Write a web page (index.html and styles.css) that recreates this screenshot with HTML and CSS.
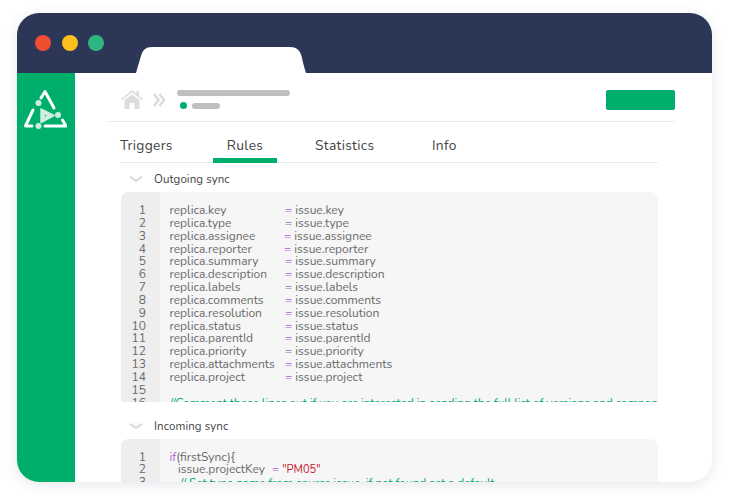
FILE: index.html
```html
<!DOCTYPE html>
<html lang="en">
<head>
<meta charset="utf-8">
<title>Sync rules</title>
<link rel="stylesheet" href="styles.css">
</head>
<body>
<div class="window">
  <header class="titlebar">
    <div class="dots"><i class="dot red"></i><i class="dot yellow"></i><i class="dot green"></i></div>
    <svg class="browser-tab" viewBox="0 0 170 26" width="170" height="26"><path d="M0 26 C3 16 4 12 5 9 C6.500 3 10 0 16 0 H154 C160 0 164 3 165.500 9 C166.500 13 167.500 18 170 26 Z" fill="#fff"/></svg>
  </header>
  <div class="body">
    <aside class="sidebar">
      <svg class="logo" viewBox="0 0 44 42" width="44" height="42">
        <g fill="none" stroke="#fff" stroke-width="3" stroke-linecap="round" stroke-linejoin="round">
          <path d="M18 9 L22 2.500 L31 19"/>
          <path d="M10 21 L2.500 37 H9"/>
          <path d="M22 37 H43 L39.500 31"/>
        </g>
        <g fill="#cdeee0">
          <circle cx="15.500" cy="14" r="3"/>
          <circle cx="35" cy="26" r="3"/>
          <circle cx="15.500" cy="37" r="3"/>
          <path fill-rule="evenodd" stroke="#cdeee0" stroke-width="1.500" stroke-linejoin="round" d="M18 20 L31 26.500 L18 33.500 Z M21 24.500 V29 L25.500 26.500 Z"/>
        </g>
      </svg>
    </aside>
    <main class="main">
      <div class="topbar">
        <svg class="home" viewBox="0 0 22 19" width="22" height="19"><path fill="#dcdcdc" d="M11 0 L15.500 3.600 V1 H18 V5.700 L22 9 L21 10.300 L11 2.300 L1 10.300 L0 9 Z M3.500 10.200 L11 4.200 L18.500 10.200 V19 H13.500 V13 H8.500 V19 H3.500 Z"/></svg>
        <svg class="crumbs" viewBox="0 0 12 14" width="12" height="14"><path d="M1 1 L5.500 7 L1 13 M6.500 1 L11 7 L6.500 13" fill="none" stroke="#dcdcdc" stroke-width="2.600"/></svg>
        <div class="crumb-text">
          <div class="bar-long"></div>
          <div class="status"><i class="status-dot"></i><i class="bar-short"></i></div>
        </div>
        <div class="action"></div>
      </div>
      <nav class="tabs">
        <span class="tab">Triggers</span>
        <span class="tab active">Rules</span>
        <span class="tab">Statistics</span>
        <span class="tab">Info</span>
      </nav>
      <div class="sections">
        <div class="section-head">
          <svg class="chev" viewBox="0 0 14 6" width="14" height="6"><path d="M1 .8 L7 5 L13 .8" fill="none" stroke="#dcdcdc" stroke-width="2.200"/></svg>
          <span>Outgoing sync</span>
        </div>
        <div class="code first">
          <div class="gutter">
            <span>1</span><span>2</span><span>3</span><span>4</span><span>5</span><span>6</span><span>7</span><span>8</span><span>9</span><span>10</span><span>11</span><span>12</span><span>13</span><span>14</span><span>15</span><span>16</span>
          </div>
          <div class="lines">
            <div class="ln"><span class="k">replica.key</span><b>=</b> issue.key</div>
            <div class="ln"><span class="k">replica.type</span><b>=</b> issue.type</div>
            <div class="ln"><span class="k tight">replica.assignee</span><b>=</b> issue.assignee</div>
            <div class="ln"><span class="k tight">replica.reporter</span><b>=</b> issue.reporter</div>
            <div class="ln"><span class="k">replica.summary</span><b>=</b> issue.summary</div>
            <div class="ln"><span class="k">replica.description</span><b>=</b> issue.description</div>
            <div class="ln"><span class="k">replica.labels</span><b>=</b> issue.labels</div>
            <div class="ln"><span class="k">replica.comments</span><b>=</b> issue.comments</div>
            <div class="ln"><span class="k">replica.resolution</span><b>=</b> issue.resolution</div>
            <div class="ln"><span class="k">replica.status</span><b>=</b> issue.status</div>
            <div class="ln"><span class="k">replica.parentId</span><b>=</b> issue.parentId</div>
            <div class="ln"><span class="k">replica.priority</span><b>=</b> issue.priority</div>
            <div class="ln"><span class="k">replica.attachments</span><b>=</b> issue.attachments</div>
            <div class="ln"><span class="k">replica.project</span><b>=</b> issue.project</div>
            <div class="ln">&nbsp;</div>
            <div class="ln comment">//Comment these lines out if you are interested in sending the full list of versions and components of the source project.</div>
          </div>
        </div>
        <div class="section-head second">
          <svg class="chev" viewBox="0 0 14 6" width="14" height="6"><path d="M1 .8 L7 5 L13 .8" fill="none" stroke="#dcdcdc" stroke-width="2.200"/></svg>
          <span>Incoming sync</span>
        </div>
        <div class="code last">
          <div class="gutter"><span>1</span><span>2</span><span>3</span></div>
          <div class="lines">
            <div class="ln"><b>if</b>(firstSync){</div>
            <div class="ln ind1">issue.projectKey <b class="eq2">=</b> <em>"PM05"</em></div>
            <div class="ln ind2 comment">// Set type name from source issue, if not found set a default</div>
          </div>
        </div>
      </div>
    </main>
  </div>
</div>
</body>
</html>
```

FILE: styles.css
```css
html, body {
  margin: 0;
  padding: 0;
  background: #fff;
}
body {
  padding: 13px 17px 0;
  height: 496px;
  box-sizing: border-box;
  overflow: hidden;
  font-family: "Nunito", "Lato", "Liberation Sans", sans-serif;
}
.window {
  width: 695px;
  height: 469px;
  border-radius: 22px;
  background: #fff;
  overflow: hidden;
  display: flex;
  flex-direction: column;
  box-shadow: 0 3px 14px rgba(40, 50, 80, .11);
}
.titlebar {
  flex: none;
  height: 60px;
  background: #2c3656;
  display: flex;
  align-items: center;
  padding-left: 18px;
}
.dots { display: flex; gap: 10.500px; }
.dot { display: block; width: 16px; height: 16px; border-radius: 50%; }
.red { background: #f04e30; }
.yellow { background: #fdc01d; }
.green { background: #2fb782; }
.browser-tab { align-self: flex-end; margin-left: 31.500px; display: block; }
.body { flex: 1; min-height: 0; display: flex; }
.sidebar {
  flex: none;
  width: 58px;
  background: #00ae6b;
  display: flex;
  justify-content: center;
  align-items: flex-start;
  padding-top: 16px;
  box-sizing: border-box;
}
.logo { display: block; margin-left: -3px; }
.main {
  flex: 1;
  min-width: 0;
  padding: 0 37px 0 33px;
  overflow: hidden;
}
.topbar {
  height: 49px;
  box-sizing: border-box;
  border-bottom: 1px solid #ececec;
  display: flex;
  align-items: flex-start;
  padding: 17px 0 0 13px;
}
.home { margin-right: 10px; }
.crumbs { margin: 3px 12px 0 0; }
.crumb-text { display: flex; flex-direction: column; }
.bar-long { width: 113px; height: 6px; border-radius: 3px; background: #bfbfbf; }
.status { display: flex; align-items: center; margin: 6px 0 0 3px; }
.status-dot { width: 7px; height: 7px; border-radius: 50%; background: #00ae6b; }
.bar-short { width: 28px; height: 6px; border-radius: 3px; background: #bfbfbf; margin-left: 5px; }
.action { margin-left: auto; width: 69px; height: 20px; border-radius: 2px; background: #00ae6b; }
.tabs {
  margin: 0 17px 0 12px;
  height: 41px;
  box-sizing: border-box;
  border-bottom: 1px solid #ececec;
  display: grid;
  grid-template-columns: 93px 102px 117px 1fr;
  align-items: stretch;
  font-size: 13.800px;
  letter-spacing: .3px;
  color: #444;
}
.tab { padding-top: 16px; line-height: 16px; }
.tab.active {
  width: 64px;
  text-align: center;
  box-sizing: border-box;
  height: 41px;
  border-bottom: 5px solid #00ae6b;
}
.sections { margin: 0 17px 0 13px; }
.section-head {
  height: 29px;
  box-sizing: border-box;
  display: flex;
  align-items: center;
  font-size: 11.500px;
  color: #444;
  letter-spacing: .1px;
  padding: 2px 0 0 8px;
}
.section-head.second { margin-top: 9px; height: 28px; }
.chev { margin-right: 11px; }
.code {
  display: flex;
  background: #f6f6f6;
  border-radius: 8px 8px 0 0;
  overflow: hidden;
  font-size: 12px;
  line-height: 12.850px;
  color: #6a6a6a;
}
.code.first { height: 210px; }
.code.last { height: 60px; }
.gutter {
  flex: none;
  width: 39px;
  box-sizing: border-box;
  padding: 12px 14px 0 0;
  background: #eeeeee;
  display: flex;
  flex-direction: column;
  align-items: flex-end;
}
.code.last .gutter { padding-top: 11.500px; }
.lines { padding: 12px 0 0 9.500px; min-width: 0; white-space: nowrap; }
.code.last .lines { padding-top: 11.500px; }
.ln { white-space: nowrap; }
.k { display: inline-block; width: 115.500px; }
.k.tight { width: 114.500px; }
.ln b { font-weight: 400; color: #b05fd0; }
.ln em { font-style: normal; font-size: 11px; color: #c8202a; }
.comment { color: #00a868; letter-spacing: -.12px; }
.ind1 { padding-left: 8.500px; }
.ind2 { padding-left: 10.500px; }
.eq2 { margin-left: 4px; }
```
